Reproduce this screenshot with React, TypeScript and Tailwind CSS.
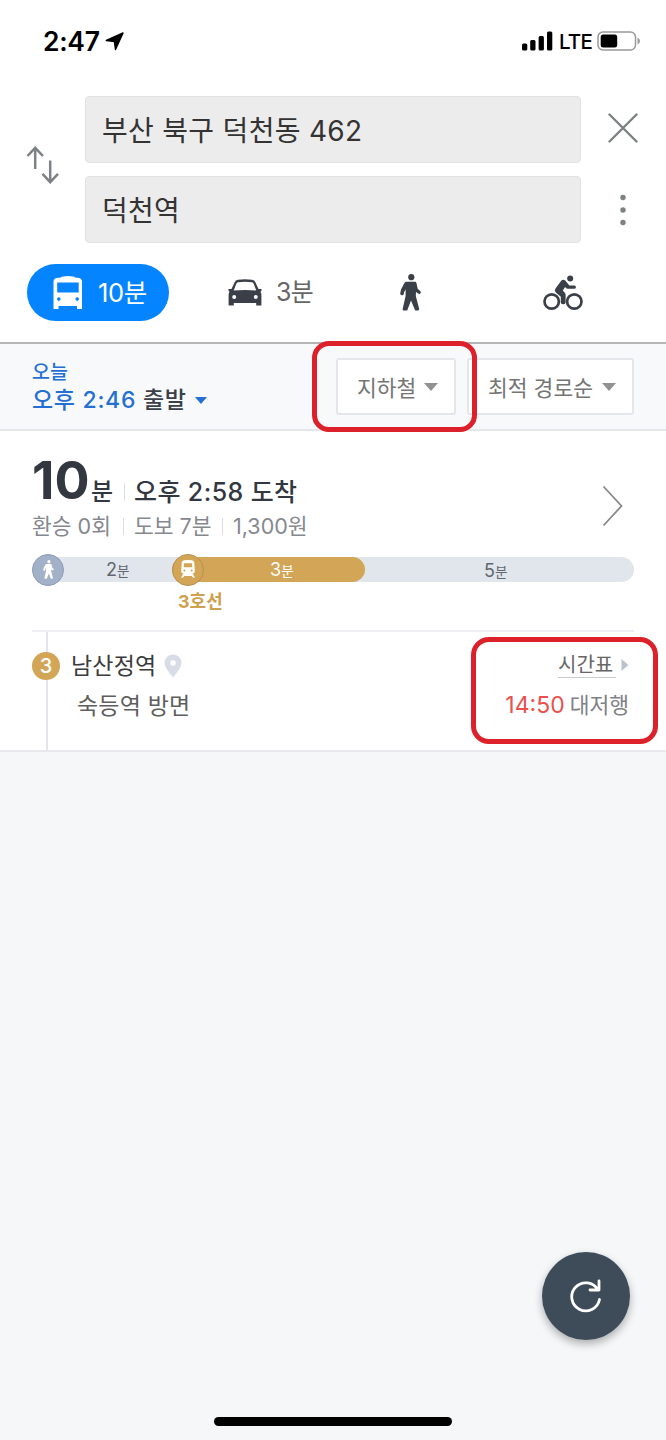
import React from 'react';

const BusIcon = () => (
  <svg width="30" height="34" viewBox="0 0 30 34" fill="#fff">
    <path
      fillRule="evenodd"
      d="M8 1.5Q9 0 15 0t7 1.5l4 .6Q29 2.6 29 6v27h-5v-3H5.500v3H.5V6Q.5 2.600 3.500 2.100ZM4.200 6.500v10h21.500v-10ZM5.800 21.300a1.800 1.800 0 1 0 0 3.600a1.800 1.800 0 1 0 0-3.600ZM24.200 21.300a1.800 1.800 0 1 0 0 3.600a1.800 1.800 0 1 0 0-3.600Z"
    />
  </svg>
);

const CarIcon = () => (
  <svg width="34" height="28" viewBox="0 0 34 28" fill="#3a3f48">
    <path
      fillRule="evenodd"
      d="M10 .7Q17-.4 24 .7 26.500 1 27.500 3.500L30.500 10h2.800q.9 1.500-.8 2.700.9 1.300.9 3V26.500h-5.200V24H5.800v2.500H.6V15.700q0-1.700.9-3Q-.2 11.500.7 10h2.800L6.500 3.500Q7.500 1 10 .7ZM10 3.200Q8.800 3.500 8.300 4.700L5.700 11.500Q17 10.600 28.300 11.500L25.700 4.700Q25.200 3.500 24 3.200 17 2.200 10 3.200ZM6.200 15.900a2 2 0 1 0 0 4a2 2 0 1 0 0-4ZM27.800 15.900a2 2 0 1 0 0 4a2 2 0 1 0 0-4Z"
    />
  </svg>
);

const WalkIcon = ({ width, height, color }: any) => (
  <svg width={width} height={height} viewBox="0 0 21 37" fill={color}>
    <circle cx="11.300" cy="3.200" r="3.100" />
    <path d="M6.500 7.800h8.600q1.100 0 1.400 1.400l1.200 5.500 2.700 2.600q.8 1-.1 2.100t-2.100.2l-2.200-1.600-.2 4.100 3.300 12.400q.3 1.600-1 1.900h-2.900L11 26.500 7.200 36.400H3.500q-1.200-.4-.8-1.700L5.600 22V15.500L4.200 17.700l-.5 2.500q-.7 1.300-2 1T.2 19.400l.8-3.800 3.400-6.500Q5.200 7.800 6.500 7.800Z" />
  </svg>
);

const BikeIcon = () => (
  <svg width="40" height="36" viewBox="0 0 40 36" fill="none" stroke="#3a3f48">
    <circle cx="8.700" cy="26.500" r="7.200" strokeWidth="2.700" />
    <circle cx="31.300" cy="26.500" r="7.200" strokeWidth="2.700" />
    <circle cx="27.200" cy="3.400" r="3" fill="#3a3f48" stroke="none" />
    <path
      fill="#3a3f48"
      stroke="none"
      d="M18.600 5.300q1.700-1.200 3.400 0l4.400 5.100h5.200q1.300.3 1.300 1.800t-1.500 1.600h-6.700q-1 0-1.700-.7l-.9-1-2.300 3.500 2 2.100q.8.8.8 2v8q-.3 1.500-2.400 1.500t-2.400-1.500v-6l-5-4.300q-1.800-1.800-.3-3.800Z"
    />
  </svg>
);

const TrainIcon = () => (
  <svg width="16" height="19" viewBox="0 0 16 19" fill="#fff">
    <path
      fillRule="evenodd"
      d="M4 .3Q8-.3 12 .3q2 .3 2.300 2.500l.5 8.400q0 2.300-2.300 2.300l2.500 4h-2.300l-.9-1.500H4.200l-.9 1.500H1l2.500-4Q1.200 13.500 1.200 11.200l.5-8.400Q2 .6 4 .3ZM4 3.200 3.700 7.200h8.600L12 3.200ZM4.400 9.500a1 1 0 1 0 0 2a1 1 0 1 0 0-2ZM11.600 9.500a1 1 0 1 0 0 2a1 1 0 1 0 0-2Z"
    />
  </svg>
);

const StatusBar = () => (
  <div className="flex h-[96px] items-start justify-between pl-[43px] pr-[24px] pt-[26px] text-black">
    <div className="flex h-[30px] items-center">
      <span className="w-[57px] pt-[2px] text-[26.500px] font-semibold tracking-[-0.300px]">2:47</span>
      <svg className="ml-[5px]" width="19" height="19" viewBox="0 0 19 19" stroke="#000" strokeWidth="1.400" strokeLinejoin="round">
        <path d="M1.300 8.500 18 1 10.500 17.500 9.400 9.600Z" />
      </svg>
    </div>
    <div className="flex h-[30px] items-center">
      <svg width="31" height="20" viewBox="0 0 31 20">
        <rect x="0" y="12.500" width="5.300" height="7" rx="1.500" />
        <rect x="8.200" y="9" width="5.300" height="10.500" rx="1.500" />
        <rect x="16.600" y="5" width="5.300" height="14.500" rx="1.500" />
        <rect x="25" y="0.500" width="5.300" height="19" rx="1.500" />
      </svg>
      <span className="ml-[6px] w-[33px] pt-[2px] text-[20.500px] font-medium tracking-[-0.800px]">LTE</span>
      <svg className="ml-[5px]" width="45" height="20" viewBox="0 0 45 20">
        <rect x="1" y="1" width="37.500" height="18" rx="5" fill="none" stroke="#999" strokeWidth="1.500" />
        <rect x="3.700" y="3.500" width="16.500" height="13" rx="2.500" />
        <path d="M40.500 6.500q2.500 1 2.500 3.500t-2.500 3.500Z" fill="#999" />
      </svg>
    </div>
  </div>
);

const Field = ({ children }: any) => (
  <div className="flex h-[67px] items-center rounded-[4px] border border-[#e2e2e2] bg-[#ececec] pl-4 pt-[2px] text-[28px] tracking-[0.300px] text-[#333]">
    {children}
  </div>
);

const Caret = ({ color, width = 14, height = 8 }: any) => (
  <svg width={width} height={height} viewBox="0 0 14 8" fill={color} preserveAspectRatio="none">
    <path d="M0 0h14L7 8Z" />
  </svg>
);

const Search = () => (
  <div className="flex h-[147px]">
    <div className="w-[85px] pl-[26px] pt-[50px]">
      <svg width="34" height="38" viewBox="0 0 34 38" fill="none" stroke="#7d8184" strokeWidth="2.500">
        <path d="M9.200 23V1.800M1.500 10 9.200 1.800 17 10M24.200 14.500V36.200M16.500 27.800l7.700 8.400 7.800-8.400" />
      </svg>
    </div>
    <div className="flex w-[496px] flex-col gap-[13px]">
      <Field>부산 북구 덕천동 462</Field>
      <Field>덕천역</Field>
    </div>
    <div className="flex flex-1 flex-col items-center pr-px pt-[17px]">
      <svg width="30" height="30" viewBox="0 0 30 30" stroke="#7d8184" strokeWidth="2.400" strokeLinecap="round">
        <path d="M1.500 1.500l27 27M28.500 1.500l-27 27" />
      </svg>
      <svg className="mt-[51px]" width="6" height="32" viewBox="0 0 6 32" fill="#7d8184">
        <circle cx="3" cy="3.500" r="2.700" />
        <circle cx="3" cy="16" r="2.700" />
        <circle cx="3" cy="28.500" r="2.700" />
      </svg>
    </div>
  </div>
);

const Modes = () => (
  <div className="flex h-[99px] items-start pl-[27px] pt-[21px]">
    <div className="flex h-[57px] w-[142px] items-center rounded-full bg-[#0584ff] pl-[26px] text-[25.500px] text-white">
      <BusIcon />
      <span className="ml-[15px] pt-px tracking-[-0.300px]">10분</span>
    </div>
    <div className="ml-[59px] flex h-[57px] w-[172px] items-center text-[25px] text-[#666]">
      <CarIcon />
      <span className="ml-[14px] pt-px tracking-[-0.600px]">3분</span>
    </div>
    <div className="flex h-[57px] w-[143px] items-center">
      <WalkIcon width={21} height={37} color="#3a3f48" />
    </div>
    <div className="flex h-[57px] items-center">
      <BikeIcon />
    </div>
  </div>
);

const Filters = () => (
  <div className="flex h-[89px] items-start border-b-2 border-t-2 border-b-[#e5e7eb] border-t-[#b4b5b7] bg-[#f8f9fb] pl-8 text-[#3a3f48]">
    <div className="w-[304px] pt-[15px] font-medium">
      <div className="h-[26px] text-[19.500px] leading-[27px] text-[#2470d2]">오늘</div>
      <div className="flex h-[30px] items-center text-[23px]">
        <span className="w-[111px] tracking-[0.700px] text-[#2470d2]">오후 2:46</span>
        <span className="w-[52px] tracking-[0.500px]">출발</span>
        <Caret color="#2470d2" width={12} height={7} />
      </div>
    </div>
    <div className="mt-[14px] flex h-[57px] w-[120px] items-center rounded-[3px] border-2 border-[#e5e6ec] bg-white pl-[19px] text-[21.500px] text-[#757575]">
      <span className="w-[67px] pt-[3px]">지하철</span>
      <Caret color="#919191" />
    </div>
    <div className="ml-[11px] mt-[14px] flex h-[57px] w-[167px] items-center rounded-[3px] border-2 border-[#e5e6ec] bg-white pl-[19px] text-[21.500px] text-[#757575]">
      <span className="w-[114px] pt-[3px]">최적 경로순</span>
      <Caret color="#919191" />
    </div>
  </div>
);

const Divider = () => <span className="mx-[10px] h-[17px] w-px bg-[#dcdde1]" />;

const Route = () => (
  <div className="h-[321px] border-b-2 border-[#e8e9ed] bg-white pl-8">
    <div className="flex h-[126px] pr-[43px]">
      <div className="flex-1">
        <div className="flex h-[78px] items-end text-[25px] font-medium leading-[34px] text-[#33373f]">
          <span className="w-[59px] text-[52px] font-bold leading-[56px]">10</span>
          <span className="w-[24px] text-[24px]">분</span>
          <span className="mb-[8px] ml-[9px] mr-[9px] h-[18px] w-px bg-[#dcdde1]" />
          <span className="tracking-[0.400px]">오후 2:58 도착</span>
        </div>
        <div className="flex h-[34px] items-center text-[21.500px] text-[#85888f]">
          <span className="w-[81px]">환승 0회</span>
          <Divider />
          <span className="w-[78px]">도보 7분</span>
          <Divider />
          <span>1,300원</span>
        </div>
      </div>
      <svg className="mt-[54px]" width="21" height="42" viewBox="0 0 21 42" fill="none" stroke="#888" strokeWidth="1.800">
        <path d="M1.500 1.500 19.500 21 1.500 40.500" />
      </svg>
    </div>

    <div className="flex h-[25px] w-[602px] rounded-full bg-[#e1e6ec] text-[18px] leading-[27px] text-[#62666f]">
      <div className="flex w-[140px] items-center">
        <span className="flex size-8 items-center justify-center rounded-full border border-[#8d9db8] bg-[#a2b1c8]">
          <WalkIcon width={11} height={19} color="#fff" />
        </span>
        <span className="ml-[42px] pt-[2px]">2<small className="text-[13.500px]">분</small></span>
      </div>
      <div className="flex w-[193px] items-center rounded-full bg-[#d2a557] text-white">
        <span className="flex size-8 items-center justify-center rounded-full border border-[#b9914d] bg-[#d2a557]">
          <TrainIcon />
        </span>
        <span className="ml-[66px] pt-[2px]">3<small className="text-[13.500px]">분</small></span>
      </div>
      <span className="ml-[119px]">5<small className="text-[13.500px]">분</small></span>
    </div>
    <div className="h-[48px] pl-[146px] pt-[6px] text-[18px] font-bold leading-[27px] text-[#cfa04e]">3호선</div>

    <div className="flex h-[120px] w-[602px] border-t-2 border-[#f0f0f4]">
      <div className="flex w-[28px] flex-col items-center">
        <div className="ml-[2px] h-[20px] w-[2px] bg-[#e3e4ea]" />
        <div className="flex size-7 items-center justify-center rounded-full bg-[#d2a557] text-[20px] font-medium text-white">3</div>
        <div className="ml-[2px] w-[2px] flex-1 bg-[#e3e4ea]" />
      </div>
      <div className="flex-1 pl-[11px] pt-[16px] text-[23px]">
        <div className="flex h-[36px] items-center tracking-[0.200px] text-[#3b3b3b]">
          남산정역
          <svg className="ml-[8px]" width="18" height="24" viewBox="0 0 18 24" fill="#d7dce6">
            <path fillRule="evenodd" d="M9 .5a8.500 8.500 0 0 1 8.500 8.500Q17.500 13.500 9 23.500.5 13.500.5 9A8.500 8.500 0 0 1 9 .5ZM9 6.200a2.800 2.800 0 1 0 0 5.600a2.800 2.800 0 1 0 0-5.600Z" />
          </svg>
        </div>
        <div className="mt-[4px] flex h-[36px] items-center pl-[6px] tracking-[0.200px] text-[#5e5e5e]">숙등역 방면</div>
      </div>
      <div className="flex flex-col items-end pr-[5px] pt-[18px]">
        <div className="flex h-[29px] items-center">
          <span className="h-[27px] w-[58px] whitespace-nowrap border-b border-[#c9cbd0] text-[20px] leading-[28px] text-[#666]">시간표</span>
          <svg className="ml-[5px]" width="8" height="12" viewBox="0 0 8 12" fill="#bcc2cc">
            <path d="M.5 0 7.500 6 .5 12Z" />
          </svg>
        </div>
        <div className="mt-[8px] flex h-[36px] items-center text-[21.500px] text-[#808085]">
          <span className="mr-[5px] text-[23px] text-[#e9504c]">14:50</span>
          대저행
        </div>
      </div>
    </div>
  </div>
);

const App = () => {
  return (
    <div className="relative flex h-[1440px] w-[666px] flex-col overflow-hidden whitespace-nowrap bg-[#f5f7f9] font-[Inter,'Noto_Sans_CJK_KR',sans-serif]">
      <div className="bg-white">
        <StatusBar />
        <Search />
        <Modes />
      </div>
      <Filters />
      <Route />

      <div className="flex flex-1 flex-col items-end justify-end pr-[36px]">
        <button className="flex size-[88px] items-center justify-center rounded-full bg-[#3e4b59] shadow-[0_4px_8px_rgba(0,0,0,0.3)]">
          <svg width="32" height="34" viewBox="0 0 32 34" fill="none" stroke="#fff" strokeWidth="2.800" strokeLinecap="round" strokeLinejoin="round">
            <path d="M29.500 20.500A14 14 0 1 1 28 11M29 2v9h-9" />
          </svg>
        </button>
      </div>
      <div className="flex h-[100px] items-end justify-center pb-[14px]">
        <div className="h-[9px] w-[238px] rounded-full bg-black" />
      </div>

      {/* highlighted areas */}
      <div className="absolute left-[312px] top-[341px] h-[91px] w-[165px] rounded-[17px] border-[5px] border-[#dc212b]" />
      <div className="absolute left-[471px] top-[637px] h-[107px] w-[187px] rounded-[18px] border-[5px] border-[#dc212b]" />
    </div>
  );
};

export default App;
